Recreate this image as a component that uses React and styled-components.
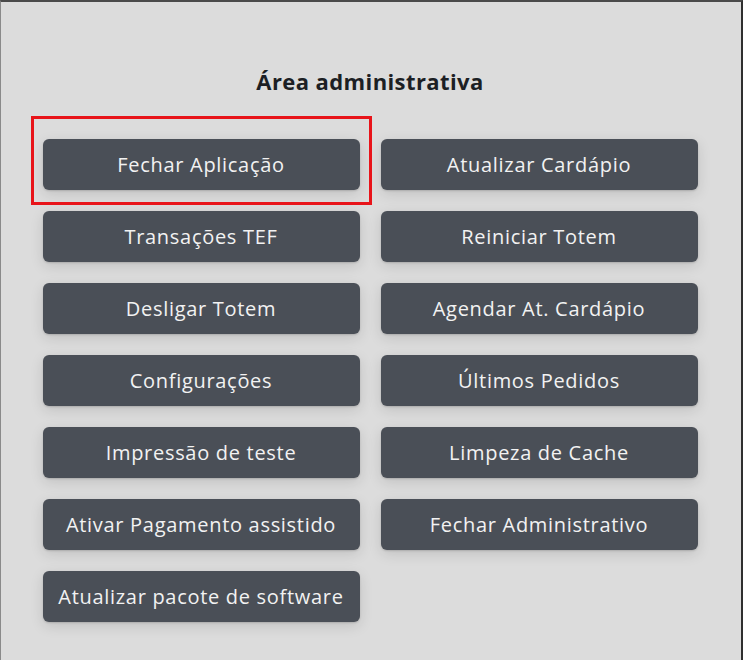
import React from "react";
import styled, { createGlobalStyle } from "styled-components";

const Global = createGlobalStyle`
  html, body { margin: 0; padding: 0; background: #ffffff; }
  body { font-family: "Open Sans", "Liberation Sans", sans-serif; }
`;

const Panel = styled.div`
  position: relative;
  box-sizing: border-box;
  width: 743px;
  height: 660px;
  padding-right: 2px;
  background: #dcdcdc;
  border-top: 2px solid #4a4a4a;
  border-left: 1px solid #8a8a8a;
  border-right: 2px solid #2e2e2e;
  display: flex;
  flex-direction: column;
  align-items: center;
`;

const Title = styled.h1`
  margin: 64px 0 0 0;
  font-family: "Open Sans", "Liberation Sans", sans-serif;
  font-weight: 700;
  font-size: 22px;
  line-height: 30px;
  color: #1c1f24;
  letter-spacing: 0.4px;
`;

const Grid = styled.div`
  margin-top: 43px;
  display: grid;
  grid-template-columns: 317px 317px;
  grid-auto-rows: 51px;
  column-gap: 21px;
  row-gap: 21px;
`;

const Button = styled.button`
  position: relative;
  border: none;
  border-radius: 6px;
  background: #4a4f57;
  color: #f2f2f2;
  font-family: "Open Sans", "Liberation Sans", sans-serif;
  font-size: 20px;
  font-weight: 400;
  letter-spacing: 0.7px;
  box-shadow: 0 4px 14px rgba(0, 0, 0, 0.12), 0 1px 2px rgba(0, 0, 0, 0.15);
  cursor: pointer;
  padding: 0;
  white-space: nowrap;
`;

const Highlight = styled.div`
  position: absolute;
  left: 30px;
  top: 114px;
  width: 341px;
  height: 89px;
  box-sizing: border-box;
  border: 3px solid #e8141a;
  pointer-events: none;
`;

const items = [
  "Fechar Aplicação",
  "Atualizar Cardápio",
  "Transações TEF",
  "Reiniciar Totem",
  "Desligar Totem",
  "Agendar At. Cardápio",
  "Configurações",
  "Últimos Pedidos",
  "Impressão de teste",
  "Limpeza de Cache",
  "Ativar Pagamento assistido",
  "Fechar Administrativo",
  "Atualizar pacote de software",
];

export default function App() {
  return (
    <>
      <Global />
      <Panel>
        <Title>Área administrativa</Title>
        <Grid>
          {items.map((t) => (
            <Button key={t}>{t}</Button>
          ))}
        </Grid>
        <Highlight />
      </Panel>
    </>
  );
}
